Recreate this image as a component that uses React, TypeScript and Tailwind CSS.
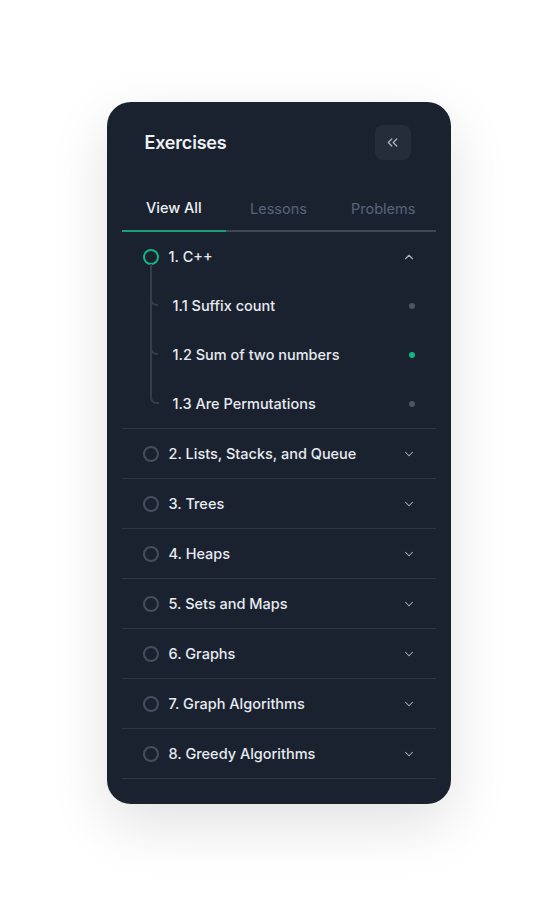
import { ChevronDown, ChevronUp, ChevronsLeft } from 'lucide-react';

const lessons = [
    { id: '1.1', title: '1.1 Suffix count', active: false },
    { id: '1.2', title: '1.2 Sum of two numbers', active: true },
    { id: '1.3', title: '1.3 Are Permutations', active: false },
];

const chapters = [
    '2. Lists, Stacks, and Queue',
    '3. Trees',
    '4. Heaps',
    '5. Sets and Maps',
    '6. Graphs',
    '7. Graph Algorithms',
    '8. Greedy Algorithms',
];

const tabs = ['View All', 'Lessons', 'Problems'];

export default function App() {
    return (
        <div
            className="min-h-[915px] w-full bg-white flex justify-center pt-[102px]"
            style={{ fontFamily: 'Inter, "Noto Sans", sans-serif' }}
        >
            <div className="w-[344px] h-[702px] rounded-[24px] bg-[#1a2230] shadow-[0_20px_60px_rgba(0,0,0,0.12)] px-[15px]">
                {/* Header */}
                <div className="flex items-center justify-between pt-[23px] pl-[23px] pr-[25px]">
                    <h2 className="text-[18px] font-semibold text-[#eef0f4] tracking-[-0.2px]">Exercises</h2>
                    <button className="h-[35px] w-[36px] rounded-lg bg-[#252d3b] flex items-center justify-center">
                        <ChevronsLeft className="h-[17px] w-[17px] text-[#aeb5c0]" strokeWidth={1.7} />
                    </button>
                </div>

                {/* Tabs */}
                <div className="mt-[38px] grid grid-cols-3 border-b-2 border-[#3c4759]">
                    {tabs.map((tab, i) => (
                        <div
                            key={tab}
                            className={
                                i === 0
                                    ? 'text-center text-[14.5px] leading-5 font-medium text-[#eef0f4] pb-[11px] -mb-[2px] border-b-2 border-[#1f9e78]'
                                    : 'text-center text-[14.5px] leading-5 text-[#56647a] pb-[11px] pt-[1px]'
                            }
                        >
                            {tab}
                        </div>
                    ))}
                </div>

                {/* Expanded chapter */}
                <div className="relative border-b border-[#2c3646]">
                    <svg className="absolute left-0 top-0" width="60" height="196" fill="none">
                        <path d="M29 32 V165 Q29 171 35 171 H37" stroke="#333d4d" strokeWidth="2" />
                        <path d="M29 67 Q29 73 36 73" stroke="#333d4d" strokeWidth="2" />
                        <path d="M29 116 Q29 122 36 122" stroke="#333d4d" strokeWidth="2" />
                    </svg>
                    <div className="h-[49px] flex items-center pl-[21px] pr-[20px]">
                        <div className="h-4 w-4 rounded-full border-2 border-[#17b383]" />
                        <span className="ml-[10px] flex-1 text-[14.5px] font-medium text-[#e8ebf0]">1. C++</span>
                        <ChevronUp className="h-[14px] w-[14px] text-[#aab1bc]" strokeWidth={2} />
                    </div>
                    {lessons.map((lesson) => (
                        <div key={lesson.id} className="h-[49px] flex items-center pl-[51px] pr-[21px]">
                            <span className="flex-1 text-[14.5px] font-medium text-[#e8ebf0]">{lesson.title}</span>
                            <div
                                className={
                                    lesson.active
                                        ? 'h-[6px] w-[6px] rounded-full bg-[#10b981]'
                                        : 'h-[6px] w-[6px] rounded-full bg-[#4b5566]'
                                }
                            />
                        </div>
                    ))}
                </div>

                {/* Collapsed chapters */}
                {chapters.map((chapter) => (
                    <div key={chapter} className="h-[50px] flex items-center pl-[21px] pr-[20px] border-b border-[#2c3646]">
                        <div className="h-4 w-4 rounded-full border-2 border-[#444e5e]" />
                        <span className="ml-[10px] flex-1 text-[14.5px] font-medium text-[#e8ebf0]">{chapter}</span>
                        <ChevronDown className="h-[14px] w-[14px] text-[#aab1bc]" strokeWidth={1.8} />
                    </div>
                ))}
            </div>
        </div>
    );
}
